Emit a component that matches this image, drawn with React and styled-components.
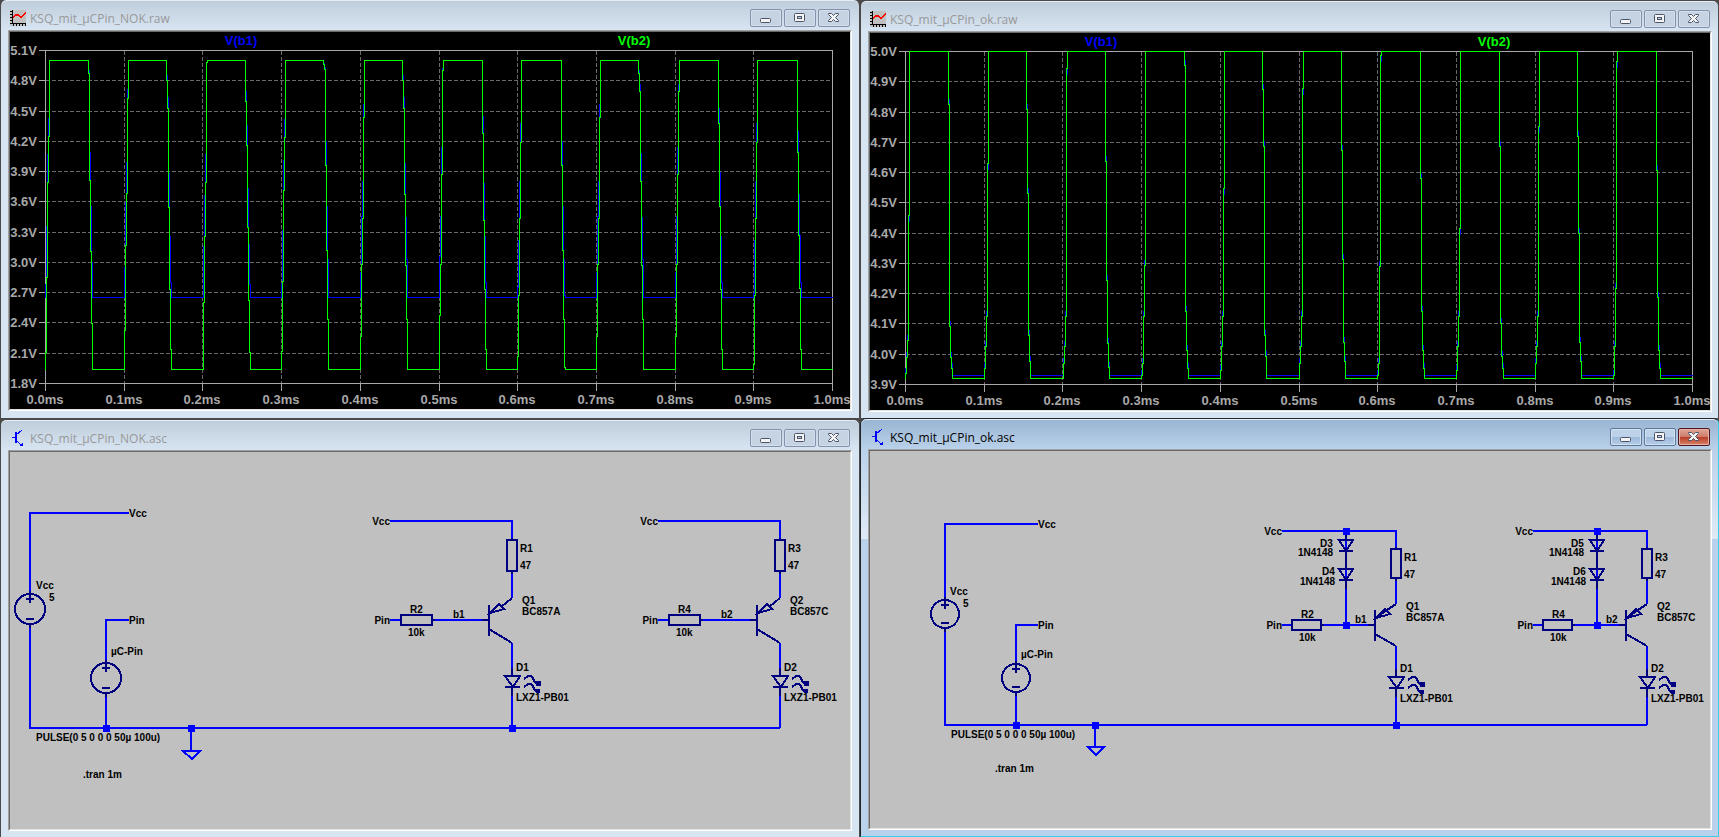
import styled, { createGlobalStyle, css } from 'styled-components';

const GlobalStyle = createGlobalStyle`
  * {
    box-sizing: border-box;
  }
  body {
    margin: 0;
    background: #4a4a4a;
    font-family: 'Open Sans', 'Noto Sans', sans-serif;
  }
`;

const CHART_NOK = {
  labels: ['5.1V', '4.8V', '4.5V', '4.2V', '3.9V', '3.6V', '3.3V', '3.0V', '2.7V', '2.4V', '2.1V', '1.8V'],
  high: 28,
  low: 337,
  blueLow: 265,
  rises: [
    [35, 320, 245, 150, 104],
    [114, 298, 213, 161, 66],
    [193, 270, 204, 150, 30],
    [271, 319, 249, 158, 105],
    [350, 304, 232, 186, 85],
    [429, 283, 232, 142, 38],
    [507, 324, 263, 186, 110],
    [586, 304, 232, 186, 85],
    [665, 304, 232, 142, 59],
    [743, 332, 263, 186, 110],
  ],
  falls: [
    [78, 41, 148, 219, 291],
    [156, 48, 76, 175, 257, 317],
    [235, 69, 113, 195, 268, 320],
    [313, 32, 37, 133, 218, 287],
    [392, 48, 76, 162, 233, 287],
    [472, 101, 188, 257, 317],
    [551, 133, 218, 287, 335],
    [628, 41, 59, 149, 233, 287],
    [708, 91, 174, 257, 317],
    [787, 120, 203, 256, 317],
  ],
  blue: (y) => Math.round(28 + ((y - 28) * 237) / 309),
};

const CHART_OK = {
  labels: ['5.0V', '4.9V', '4.8V', '4.7V', '4.6V', '4.5V', '4.4V', '4.3V', '4.2V', '4.1V', '4.0V', '3.9V'],
  high: 18,
  low: 345,
  blueLow: 342,
  rises: [
    [35, 340, 324, 307, 182],
    [114, 335, 313, 283, 130],
    [193, 330, 313, 283, 35],
    [271, 342, 330, 283, 232],
    [350, 337, 313, 283, 155],
    [429, 330, 313, 283, 55],
    [507, 342, 330, 233, 22],
    [586, 337, 313, 283, 195],
    [665, 330, 313, 283, 93],
    [743, 342, 313, 255, 28],
  ],
  falls: [
    [78, 71, 293, 324, 335],
    [156, 76, 160, 302, 328],
    [235, 128, 247, 310, 334],
    [314, 32, 278, 317, 335],
    [392, 56, 113, 302, 323],
    [471, 117, 226, 309, 328],
    [550, 145, 278, 317, 335],
    [629, 113, 290, 323, 335],
    [707, 103, 200, 309, 328],
    [786, 137, 264, 317, 335],
  ],
  blue: (y, rising) => (rising && y < 200 ? y + 6 : y - 5),
};

const LEFT = 35;
const RIGHT = 822;
const TOP = 18;
const BOTTOM = 351;

function tracePath({ rises, falls }, high, low, map) {
  let d = `M${LEFT} ${low}`;
  rises.forEach(([start, ...ys], i) => {
    d += `H${start}`;
    ys.forEach((y) => {
      d += `V${Math.min(low, map(y, true))}h1`;
    });
    d += `V${high}`;
    const [fall, ...drops] = falls[i];
    d += `H${fall}`;
    drops.forEach((y) => {
      d += `V${Math.min(low, map(y, false))}h1`;
    });
    d += `V${low}`;
  });
  return `${d}H${RIGHT}`;
}

function Waveform({ chart, title }) {
  const xs = Array.from({ length: 11 }, (_, i) => Math.round(LEFT + ((RIGHT - LEFT) * i) / 10));
  const ys = chart.labels.map((_, i) => Math.round(TOP + ((BOTTOM - TOP) * i) / 11));
  return (
    <Drawing viewBox="0 0 840 377" preserveAspectRatio="xMinYMin meet" role="img" aria-label={title}>
      <g transform="translate(.5 .5)">
        <Grid>
          {ys.slice(1, -1).map((y) => <path key={y} d={`M${LEFT} ${y}H${RIGHT}`} />)}
          {xs.slice(1, -1).map((x) => <path key={x} d={`M${x} ${TOP}V${BOTTOM}`} />)}
        </Grid>
        <Axis>
          <path d={`M${LEFT} ${TOP}H${RIGHT}V${BOTTOM}H${LEFT}Z`} />
          {ys.map((y) => <path key={y} d={`M28 ${y}H${LEFT}`} />)}
          {xs.map((x) => <path key={x} d={`M${x} ${BOTTOM}v7`} />)}
        </Axis>
        <Trace $color="#0000ff" d={tracePath(chart, chart.high, chart.blueLow, chart.blue)} />
        <Trace $color="#00ff00" d={tracePath(chart, chart.high, chart.low, (y) => y)} />
      </g>
      {chart.labels.map((label, i) => (
        <AxisText key={label} x="27" y={ys[i] + 5} textAnchor="end">{label}</AxisText>
      ))}
      {xs.map((x, i) => (
        <AxisText key={x} x={x} y="372" textAnchor="middle">{(i / 10).toFixed(1)}ms</AxisText>
      ))}
      <AxisText x="231" y="13" textAnchor="middle" $color="#0000ff">V(b1)</AxisText>
      <AxisText x="624" y="13" textAnchor="middle" $color="#00ff00">V(b2)</AxisText>
    </Drawing>
  );
}

function Source({ x, y, r }) {
  return (
    <Symbol>
      <circle cx={x} cy={y} r={r} />
      <path d={`M${x} ${y - r - 3}v12M${x - 4} ${y - r + 5}h8M${x - 4} ${y + r - 5}h8M${x} ${y + r}v4`} />
    </Symbol>
  );
}

function Junction({ x, y }) {
  return <rect x={x - 3} y={y - 3} width="7" height="7" fill="#0000ff" shapeRendering="crispEdges" />;
}

function Diode({ x, y }) {
  return <path d={`M${x - 7} ${y}h14l-7 11zM${x - 7} ${y + 11}h14`} />;
}

function Led({ x, y }) {
  return (
    <g>
      <path d={`M${x - 7} ${y}h15l-7 11zM${x - 7} ${y + 11}h15M${x} ${y - 8}v8M${x} ${y + 11}v9`} />
      <path d={`M${x + 12} ${y + 3}l4 -3h3l2 2l1 3l2 2h2M${x + 12} ${y + 11}l4 -3h3l2 2l1 3l2 2h2`} />
      <path d={`M${x + 24} ${y + 5}h4v4h-4zM${x + 24} ${y + 13}h3v3h-3z`} fill="#000080" strokeWidth="1" />
    </g>
  );
}

// LED driver branch: supply rail, emitter resistor, PNP transistor, LED
function Branch({ g, dx, names, diodes }) {
  const [rE, rB, q, led, base, type] = names;
  return (
    <g transform={`translate(${dx} 0)`}>
      <Wire d={`M${g.wire} ${g.rail}H${g.x}V${g.r1}M${g.x} ${g.r1 + g.rLen}V${g.emitter}M${g.x} ${g.collector}V${g.led}M${g.x} ${g.led + 11}V${g.gnd}`} />
      <Wire d={`M${g.wire} ${g.base}H${g.r2}M${g.r2 + g.rLen} ${g.base}H${g.bar}`} />
      {diodes && <Wire d={`M${g.dx} ${g.rail}V${g.base}`} />}
      <Symbol>
        <rect x={g.x - g.rHalf} y={g.r1} width={g.rHalf * 2} height={g.rLen} />
        <rect x={g.r2} y={g.base - g.rHalf} width={g.rLen} height={g.rHalf * 2} />
        <path d={`M${g.x} ${g.r1 - 2}v2M${g.x} ${g.r1 + g.rLen}v3M${g.r2 + g.rLen} ${g.base}h3`} />
        <path d={`M${g.bar} ${g.base - 15}v31M${g.bar - 7} ${g.base}h7`} />
        <path d={`M${g.x} ${g.emitter}L${g.bar + g.arrow} ${g.base - 7 - g.arrow / 2}M${g.bar} ${g.base + 9}L${g.x} ${g.collector}`} />
        <path d={`M${g.bar + 1} ${g.base - 7}l9 -9l5 5z`} />
        <Led x={g.x} y={g.led} />
        {diodes && (
          <g>
            <path d={`M${g.dx} ${g.rail}v9M${g.dx} 100v18M${g.dx} 129v9`} />
            <Diode x={g.dx} y={89} />
            <Diode x={g.dx} y={118} />
          </g>
        )}
      </Symbol>
      {diodes && (
        <g>
          <Junction x={g.dx} y={g.rail} />
          <Junction x={g.dx} y={g.base} />
          <Label x="450" y="96">{diodes[0]}</Label>
          <Label x="428" y="105">1N4148</Label>
          <Label x="452" y="124">{diodes[1]}</Label>
          <Label x="430" y="134">1N4148</Label>
        </g>
      )}
      <Label x={g.wire} y={g.rail + 4} textAnchor="end">Vcc</Label>
      <Label x={g.wire} y={g.base + 4} textAnchor="end">Pin</Label>
      <Label x={g.x + 8} y={g.r1 + 12}>{rE}</Label>
      <Label x={g.x + 8} y={g.r1 + 29}>47</Label>
      <Label x={g.r2 + 9} y={g.base - 7}>{rB}</Label>
      <Label x={g.r2 + 7} y={g.base + 16}>10k</Label>
      <Label x={g.baseText} y={g.base - 2}>{base}</Label>
      <Label x={g.x + 10} y={g.emitter + 6}>{q}</Label>
      <Label x={g.x + 10} y={g.emitter + 17}>{type}</Label>
      <Label x={g.x + 4} y={g.led - 5}>{led}</Label>
      <Label x={g.x + 4} y={g.led + 25}>LXZ1-PB01</Label>
    </g>
  );
}

const BRANCH_NOK = {
  x: 502, wire: 380, rail: 69, r1: 88, rLen: 31, rHalf: 5, emitter: 146, base: 168, bar: 479,
  collector: 191, led: 224, gnd: 276, r2: 391, baseText: 443, arrow: 12,
};

const BRANCH_OK = {
  x: 526, wire: 412, rail: 80, r1: 98, rLen: 29, rHalf: 5, emitter: 153, base: 174, bar: 505,
  collector: 195, led: 226, gnd: 274, r2: 422, baseText: 485, dx: 476, arrow: 0,
};

function SchematicNok() {
  return (
    <Drawing viewBox="0 0 840 377" preserveAspectRatio="xMinYMin meet" role="img" aria-label="KSQ_mit_µCPin_NOK.asc">
      <Wire d="M119 61H20V142M20 172V276H770M119 168H96V211M96 241V276M181 276V299M173 299h17l-8 8z" />
      <Source x={20} y={157} r={15} />
      <Source x={96} y={226} r={15} />
      <Branch g={BRANCH_NOK} dx={0} names={['R1', 'R2', 'Q1', 'D1', 'b1', 'BC857A']} />
      <Branch g={BRANCH_NOK} dx={268} names={['R3', 'R4', 'Q2', 'D2', 'b2', 'BC857C']} />
      <Junction x={96} y={276} />
      <Junction x={181} y={276} />
      <Junction x={502} y={276} />
      <Label x="119" y="65">Vcc</Label>
      <Label x="26" y="137">Vcc</Label>
      <Label x="39" y="149">5</Label>
      <Label x="119" y="172">Pin</Label>
      <Label x="101" y="203">µC-Pin</Label>
      <Label x="26" y="289">PULSE(0 5 0 0 0 50µ 100u)</Label>
      <Label x="73" y="326">.tran 1m</Label>
    </Drawing>
  );
}

function SchematicOk() {
  return (
    <Drawing viewBox="0 0 840 377" preserveAspectRatio="xMinYMin meet" role="img" aria-label="KSQ_mit_µCPin_ok.asc">
      <Wire d="M168 73H75V149M75 177V274H777M168 174H146V213M146 241V274M225 274V296M218 296h16l-8 8z" />
      <Source x={75} y={163} r={14} />
      <Source x={146} y={227} r={14} />
      <Branch g={BRANCH_OK} dx={0} names={['R1', 'R2', 'Q1', 'D1', 'b1', 'BC857A']} diodes={['D3', 'D4']} />
      <Branch g={BRANCH_OK} dx={251} names={['R3', 'R4', 'Q2', 'D2', 'b2', 'BC857C']} diodes={['D5', 'D6']} />
      <Junction x={146} y={274} />
      <Junction x={225} y={274} />
      <Junction x={526} y={274} />
      <Label x="168" y="77">Vcc</Label>
      <Label x="80" y="144">Vcc</Label>
      <Label x="93" y="156">5</Label>
      <Label x="168" y="178">Pin</Label>
      <Label x="151" y="207">µC-Pin</Label>
      <Label x="81" y="287">PULSE(0 5 0 0 0 50µ 100u)</Label>
      <Label x="125" y="321">.tran 1m</Label>
    </Drawing>
  );
}

function ChartIcon() {
  return (
    <svg width="16" height="16" viewBox="0 0 16 16" shapeRendering="crispEdges" aria-hidden="true">
      <rect width="16" height="16" fill="#c0c0c0" />
      <path d="M2.5 0V14M0 1.5H2M0 4.5H2M0 7.5H2M0 10.5H2M0 13.5H16M3.5 14V16M6.5 14V16M9.5 14V16M12.5 14V16M15.5 14V16" stroke="#000" />
      <path d="M3 8l3 -3h2l2 2h2l4 -4" fill="none" stroke="#f00" />
      <path d="M3 7l3 -3h2l2 2h2l4 -4" fill="none" stroke="#f00" />
    </svg>
  );
}

function TransistorIcon() {
  return (
    <svg width="16" height="16" viewBox="0 0 16 16" shapeRendering="crispEdges" aria-hidden="true">
      <path d="M2 7.5h4M6 5L12 0M6 10l5 5" fill="none" stroke="#00f" />
      <path d="M6 2v11" stroke="#00f" strokeWidth="2" />
      <path d="M13 16v-4l-4 4z" fill="#00f" />
    </svg>
  );
}

function MinimizeGlyph() {
  return (
    <svg width="14" height="12" viewBox="0 0 14 12" aria-hidden="true">
      <rect x="1.500" y="6.500" width="10" height="4" rx="1" fill="#f4f4f4" stroke="#4b5468" />
    </svg>
  );
}

function RestoreGlyph() {
  return (
    <svg width="14" height="12" viewBox="0 0 14 12" aria-hidden="true">
      <rect x="1.500" y="1.500" width="10" height="8" rx="1" fill="#f4f4f4" stroke="#4b5468" />
      <rect x="4.500" y="4.500" width="4" height="2" fill="#c3d2e3" stroke="#4b5468" />
    </svg>
  );
}

function CloseGlyph() {
  return (
    <svg width="14" height="12" viewBox="0 0 14 12" aria-hidden="true">
      <path d="M1.500 1.500h3l2 2l2 -2h3v1l-3 3l3 3v1h-3l-2 -2l-2 2h-3v-1l3 -3l-3 -3z" fill="#f4f4f4" stroke="#4b5468" />
    </svg>
  );
}

function DocWindow({ title, icon, active, edge, children }) {
  return (
    <Frame $active={active} $edge={edge}>
      <TitleBar>
        {icon}
        <Title $active={active}>{title}</Title>
        <CaptionButton aria-label="Minimize" $active={active}><MinimizeGlyph /></CaptionButton>
        <CaptionButton aria-label="Restore" $active={active}><RestoreGlyph /></CaptionButton>
        <CaptionButton aria-label="Close" $active={active} $close={active}><CloseGlyph /></CaptionButton>
      </TitleBar>
      <Client>{children}</Client>
    </Frame>
  );
}

export default function App() {
  return (
    <Desktop>
      <GlobalStyle />
      <Column $rows="419fr 418fr">
        <DocWindow title="KSQ_mit_µCPin_NOK.raw" icon={<ChartIcon />} edge="top">
          <Plot><Waveform chart={CHART_NOK} title="KSQ_mit_µCPin_NOK.raw" /></Plot>
        </DocWindow>
        <DocWindow title="KSQ_mit_µCPin_NOK.asc" icon={<TransistorIcon />} edge="bottom">
          <Sheet><SchematicNok /></Sheet>
        </DocWindow>
      </Column>
      <Column $rows="418fr 419fr">
        <DocWindow title="KSQ_mit_µCPin_ok.raw" icon={<ChartIcon />} edge="bottom">
          <Plot><Waveform chart={CHART_OK} title="KSQ_mit_µCPin_ok.raw" /></Plot>
        </DocWindow>
        <DocWindow title="KSQ_mit_µCPin_ok.asc" icon={<TransistorIcon />} active>
          <Sheet><SchematicOk /></Sheet>
        </DocWindow>
      </Column>
    </Desktop>
  );
}

const Desktop = styled.main`
  display: grid;
  grid-template-columns: 860fr 859fr;
  height: 100vh;
  overflow: hidden;
`;

const Column = styled.div`
  display: grid;
  grid-template-rows: ${(props) => props.$rows};
  min-width: 0;
`;

const inactiveFrame = css`
  border-color: #4a4a4a;
  background: linear-gradient(#bfcddb, #d7e4f2 30px);
`;

const activeFrame = css`
  border-color: #20262e #35cfe6 #35cfe6 #20262e;
  background:
    linear-gradient(#99b4d1, #b9d1ea) 0 0 / 100% 30px no-repeat,
    linear-gradient(#b9d1ea, #dfeaf6) 0 30px / 100% 90px no-repeat,
    #b9d1ea;
`;

const Frame = styled.section`
  display: flex;
  flex-direction: column;
  min-height: 0;
  min-width: 0;
  padding: 0 6px 6px 7px;
  border: 1px solid;
  border-radius: 6px 6px 0 0;
  box-shadow: inset 0 1px 0 #e6edf5;
  ${(props) => (props.$active ? activeFrame : inactiveFrame)}
  ${(props) => props.$edge === 'top' && 'border-top: none; padding-bottom: 7px;'}
  ${(props) => props.$edge === 'bottom' && 'border-bottom: none;'}
  ${Column}:first-child & {
    padding-right: 7px;
  }
`;

const TitleBar = styled.header`
  display: flex;
  align-items: center;
  gap: 2px;
  height: 30px;
  padding: 6px 2px 0;
`;

const Title = styled.h2`
  flex: 1;
  margin: 0 0 0 2px;
  padding-top: 1px;
  font-size: 12px;
  line-height: 16px;
  font-weight: 400;
  color: ${(props) => (props.$active ? '#000000' : '#999999')};
`;

const CaptionButton = styled.button`
  display: flex;
  align-items: center;
  justify-content: center;
  width: 32px;
  height: 18px;
  padding: 0;
  border: 1px solid ${(props) => (props.$active ? '#5f7796' : '#8391ad')};
  border-radius: 2px;
  background: ${(props) => (props.$active ? 'linear-gradient(#bdd1e8 50%, #9db9d9 50%, #b4cde8)' : '#c5d3e2')};
  box-shadow: inset 0 0 0 1px ${(props) => (props.$active ? '#d0e1f3' : '#d3dfec')};
  ${(props) =>
    props.$close &&
    css`
      border-color: #4f1520;
      background: linear-gradient(#dfa595, #cf7a68 50%, #b83a24 50%, #d98468);
      box-shadow: inset 0 0 0 1px #e5b3a6;
    `}
`;

const Client = styled.div`
  flex: 1;
  display: flex;
  min-height: 0;
  border: 1px solid;
  border-color: #a0a0a0 #ffffff #ffffff #a0a0a0;
`;

const Plot = styled.div`
  flex: 1;
  min-width: 0;
  border: 1px solid;
  border-color: #696969 #e3e3e3 #e3e3e3 #696969;
  background: #000000;
`;

const Sheet = styled(Plot)`
  background: #c0c0c0;
`;

const Drawing = styled.svg`
  display: block;
  width: 100%;
  height: 100%;
  font-family: 'Liberation Sans', Arial, sans-serif;
`;

const Grid = styled.g`
  fill: none;
  stroke: #696969;
  stroke-dasharray: 4 2;
  shape-rendering: crispEdges;
`;

const Axis = styled.g`
  fill: none;
  stroke: #a8a8a8;
  shape-rendering: crispEdges;
`;

const Trace = styled.path`
  fill: none;
  stroke: ${(props) => props.$color};
  shape-rendering: crispEdges;
`;

const AxisText = styled.text`
  font-size: 13px;
  font-weight: 700;
  fill: ${(props) => props.$color || '#a8a8a8'};
`;

const Wire = styled.path`
  fill: none;
  stroke: #0000ff;
  stroke-width: 2px;
  shape-rendering: crispEdges;
`;

const Symbol = styled.g`
  fill: none;
  stroke: #000080;
  stroke-width: 2px;
  shape-rendering: crispEdges;
`;

const Label = styled.text`
  font-size: 10px;
  font-weight: 700;
  fill: #000000;
`;
